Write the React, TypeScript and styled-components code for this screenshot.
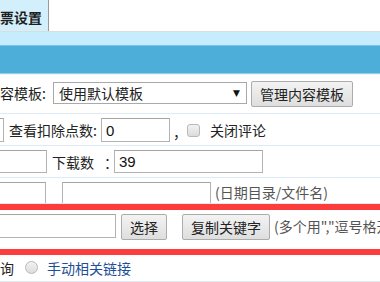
import React from 'react';
import styled, { createGlobalStyle } from 'styled-components';

const GlobalStyle = createGlobalStyle`
  html, body {
    margin: 0;
    padding: 0;
    background: #fff;
    overflow: hidden;
  }
  body {
    width: 380px;
    height: 282px;
    font-family: "Noto Sans CJK SC", "Liberation Sans", sans-serif;
    font-size: 14px;
    color: #222;
  }
`;

const Page = styled.div`
  width: 380px;
  height: 282px;
  overflow: hidden;
  display: flex;
  flex-direction: column;
`;

const TabBar = styled.div`
  height: 31px;
  display: flex;
  border-bottom: 1px solid #dcdcdc;
`;

const Tab = styled.div`
  width: 48px;
  background: #d3effc;
  border-right: 1px solid #9a9a9a;
  font-weight: 600;
  line-height: 34px;
  white-space: nowrap;
  overflow: hidden;
  color: #1e1e1e;
`;

const LightBand = styled.div`
  height: 13px;
  background: #c6ecfd;
  border-bottom: 1px solid #78c4e8;
`;

const DarkBand = styled.div`
  height: 27px;
  background: #4daed9;
  border-bottom: 1px solid #8ccfee;
`;

const Form = styled.div`
  flex: 1;
  display: flex;
  flex-direction: column;
  padding-top: 3px;
  border-top: 1px solid #eef6fc;
`;

const Row = styled.div<{ $h: number; $pt: number }>`
  height: ${p => p.$h}px;
  padding-top: ${p => p.$pt}px;
  box-sizing: border-box;
  display: flex;
  align-items: flex-start;
  border-bottom: 1px solid #dde9f4;
  white-space: nowrap;
  overflow: hidden;
`;

const Highlight = styled.div`
  border-top: 6px solid #fd3c3c;
  border-bottom: 6px solid #fd3c3c;
  height: 35px;
  padding-top: 4px;
  box-sizing: content-box;
  display: flex;
  align-items: flex-start;
  white-space: nowrap;
  overflow: hidden;
`;

const Footer = styled.div`
  flex: 1;
  background: #e7f1fa;
`;

const Text = styled.span<{ $ml?: number; $mt?: number; $muted?: boolean; $link?: boolean }>`
  margin-left: ${p => p.$ml ?? 0}px;
  margin-top: ${p => p.$mt ?? 0}px;
  line-height: 20px;
  color: ${p => (p.$link ? '#1c4f96' : p.$muted ? '#555' : '#222')};
`;

const Input = styled.input<{ $w: number; $ml?: number; $h?: number }>`
  width: ${p => p.$w}px;
  height: ${p => p.$h ?? 24}px;
  margin: 0 0 0 ${p => p.$ml ?? 0}px;
  padding: 0 4px;
  box-sizing: border-box;
  border: 1px solid #b3b3b3;
  border-top-color: #a4a4a4;
  background: #fff;
  font-family: "Liberation Sans", Arial, sans-serif;
  font-size: 15px;
  color: #111;
  flex-shrink: 0;
  outline: none;
`;

const Select = styled.div`
  width: 194px;
  height: 22px;
  margin: 1px 0 0 7px;
  box-sizing: border-box;
  border: 1px solid #a9a9a9;
  display: flex;
  align-items: center;
  justify-content: space-between;
  padding: 0 6px 0 5px;
  line-height: 20px;
  flex-shrink: 0;

  i {
    font-style: normal;
    font-size: 9px;
    color: #111;
    font-family: "DejaVu Sans", sans-serif;
  }
`;

const Button = styled.button<{ $w: number; $ml?: number }>`
  width: ${p => p.$w}px;
  height: 26px;
  margin: 0 0 0 ${p => p.$ml ?? 0}px;
  padding: 0;
  box-sizing: border-box;
  border: 1px solid #acacac;
  border-radius: 2px;
  background: linear-gradient(#f3f3f3, #dedede);
  font-family: "Noto Sans CJK SC", sans-serif;
  font-size: 14px;
  color: #222;
  line-height: 22px;
  flex-shrink: 0;
`;

const Check = styled.span<{ $round?: boolean; $ml: number; $mt: number }>`
  width: 13px;
  height: 13px;
  margin: ${p => p.$mt}px 0 0 ${p => p.$ml}px;
  box-sizing: border-box;
  border: 1px solid #b8b8b8;
  border-radius: ${p => (p.$round ? '50%' : '3px')};
  background: linear-gradient(#f2f2f2, #dcdcdc);
  flex-shrink: 0;
`;

export default function App() {
  return (
    <Page>
      <GlobalStyle />
      <TabBar>
        <Tab>票设置</Tab>
      </TabBar>
      <LightBand />
      <DarkBand />
      <Form>
        <Row $h={36} $pt={3}>
          <Text $mt={2}>容模板:</Text>
          <Select>
            <span>使用默认模板</span>
            <i>▼</i>
          </Select>
          <Button $w={102} $ml={4}>管理内容模板</Button>
        </Row>
        <Row $h={32} $pt={4}>
          <Input $w={44} $ml={-40} />
          <Text $ml={5} $mt={2}>查看扣除点数:</Text>
          <Input $w={69} $ml={4} defaultValue="0" />
          <Text $ml={3} $mt={4}>，</Text>
          <Check $ml={0} $mt={6} />
          <Text $ml={10} $mt={2}>关闭评论</Text>
        </Row>
        <Row $h={32} $pt={4}>
          <Input $w={87} $ml={-40} $h={23} />
          <Text $ml={5} $mt={2}>下载数</Text>
          <Text $ml={10} $mt={2}>：</Text>
          <Input $w={149} $ml={-4} $h={23} defaultValue="39" />
        </Row>
        <Row $h={26} $pt={4}>
          <Input $w={86} $ml={-40} $h={26} />
          <Input $w={149} $ml={16} $h={26} />
          <Text $ml={4} $mt={0} $muted>(日期目录/文件名)</Text>
        </Row>
        <Highlight>
          <Input $w={156} $ml={-40} />
          <Button $w={46} $ml={5}>选择</Button>
          <Button $w={88} $ml={15}>复制关键字</Button>
          <Text $ml={4} $mt={2} $muted>(多个用","逗号格开)</Text>
        </Highlight>
        <Row $h={27} $pt={3}>
          <Text $mt={0}>询</Text>
          <Check $round $ml={11} $mt={3} />
          <Text $ml={9} $mt={0} $link>手动相关链接</Text>
        </Row>
        <Footer />
      </Form>
    </Page>
  );
}
